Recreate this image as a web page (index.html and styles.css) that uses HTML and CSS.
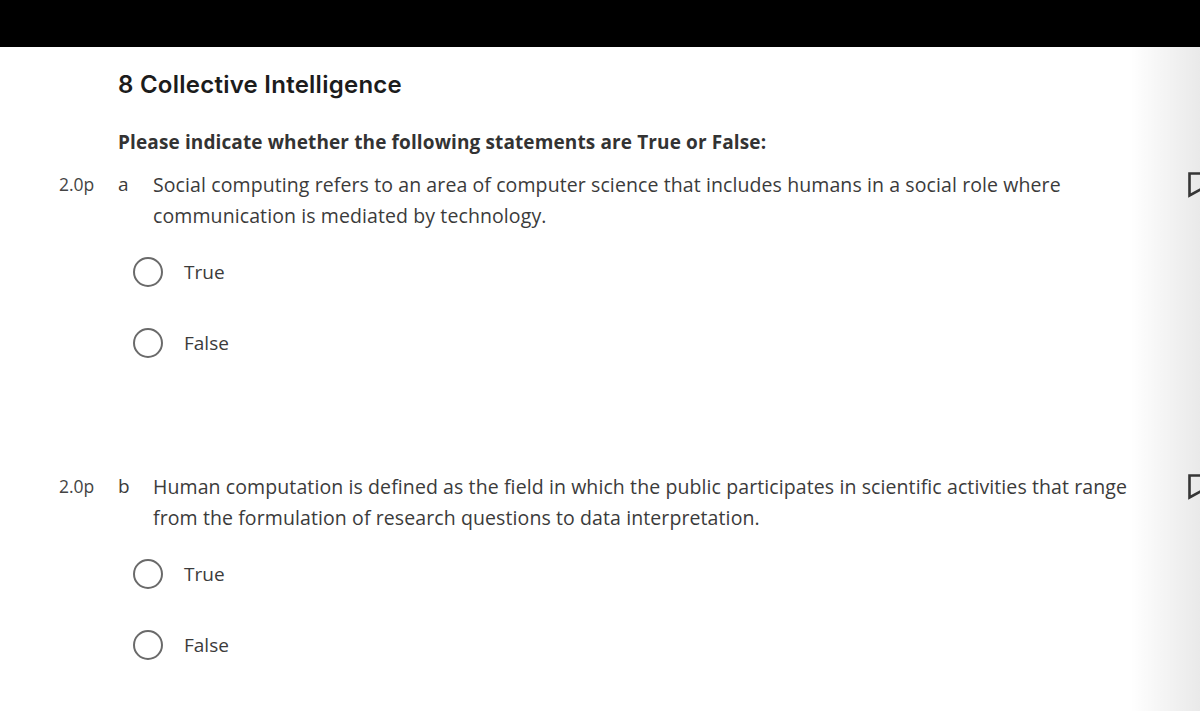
FILE: index.html
```html
<!DOCTYPE html>
<html lang="en">
<head>
<meta charset="utf-8">
<title>8 Collective Intelligence</title>
<link rel="stylesheet" href="styles.css">
</head>
<body>
<div class="topbar"></div>
<main class="page">
  <h1 class="title">8 Collective Intelligence</h1>
  <p class="instruction">Please indicate whether the following statements are True or False:</p>

  <section class="question">
    <div class="qrow">
      <span class="points">2.0p</span>
      <span class="letter">a</span>
      <p class="qtext">Social computing refers to an area of computer science that includes humans in a social role where communication is mediated by technology.</p>
      <svg class="flag" width="30" height="28" viewBox="0 0 30 28"><path d="M3.5 25.5 V3.5 H29 V18 H17 Z" fill="none" stroke="#3a3a3a" stroke-width="2.6" stroke-linejoin="miter"/></svg>
    </div>
    <div class="options">
      <label class="option"><span class="radio"></span><span class="otext">True</span></label>
      <label class="option"><span class="radio"></span><span class="otext">False</span></label>
    </div>
  </section>

  <section class="question">
    <div class="qrow">
      <span class="points">2.0p</span>
      <span class="letter">b</span>
      <p class="qtext">Human computation is defined as the field in which the public participates in scientific activities that range from the formulation of research questions to data interpretation.</p>
      <svg class="flag" width="30" height="28" viewBox="0 0 30 28"><path d="M3.5 25.5 V3.5 H29 V18 H17 Z" fill="none" stroke="#3a3a3a" stroke-width="2.6" stroke-linejoin="miter"/></svg>
    </div>
    <div class="options">
      <label class="option"><span class="radio"></span><span class="otext">True</span></label>
      <label class="option"><span class="radio"></span><span class="otext">False</span></label>
    </div>
  </section>
</main>
<div class="edge-shadow"></div>
</body>
</html>
```

FILE: styles.css
```css
html, body {
  margin: 0;
  padding: 0;
  background: #ffffff;
  overflow: hidden;
  height: 711px;
}
body {
  font-family: "Open Sans", "Noto Sans", sans-serif;
  color: #3b3b3b;
  position: relative;
}
.topbar {
  height: 47px;
  background: #000;
}
.page {
  padding-top: 23px;
}
.title {
  margin: 0 0 0 118px;
  font-family: "Inter", "Noto Sans", sans-serif;
  font-weight: 600;
  font-size: 24px;
  line-height: 30px;
  color: #1c1c1c;
  letter-spacing: 0.25px;
}
.instruction {
  margin: 27px 0 0 118px;
  font-size: 19px;
  font-weight: 700;
  line-height: 30px;
  color: #333;
  letter-spacing: 0.12px;
}
.question {
  margin-top: 12px;
}
.question + .question {
  margin-top: 113px;
}
.qrow {
  display: flex;
  align-items: flex-start;
  padding-left: 59px;
}
.points {
  width: 59px;
  flex: none;
  font-size: 17.5px;
  line-height: 31px;
  color: #444;
}
.letter {
  width: 35px;
  flex: none;
  font-size: 19px;
  line-height: 31px;
}
.qtext {
  margin: 0;
  width: 990px;
  flex: none;
  font-size: 19.5px;
  line-height: 31px;
  letter-spacing: 0.1px;
}
.flag {
  flex: none;
  margin-left: 43px;
  margin-top: 1px;
}
.options {
  display: flex;
  flex-direction: column;
  gap: 41px;
  padding-left: 133px;
  margin-top: 26px;
}
.option {
  display: flex;
  align-items: center;
  gap: 21px;
  height: 30px;
}
.radio {
  width: 30px;
  height: 30px;
  box-sizing: border-box;
  border: 2.6px solid #6a6a6a;
  border-radius: 50%;
  flex: none;
}
.otext {
  font-size: 19px;
  color: #3b3b3b;
}
.edge-shadow {
  position: absolute;
  top: 47px;
  right: 0;
  bottom: 0;
  width: 70px;
  background: linear-gradient(to right, rgba(0,0,0,0), rgba(0,0,0,0.085));
  pointer-events: none;
}
```
